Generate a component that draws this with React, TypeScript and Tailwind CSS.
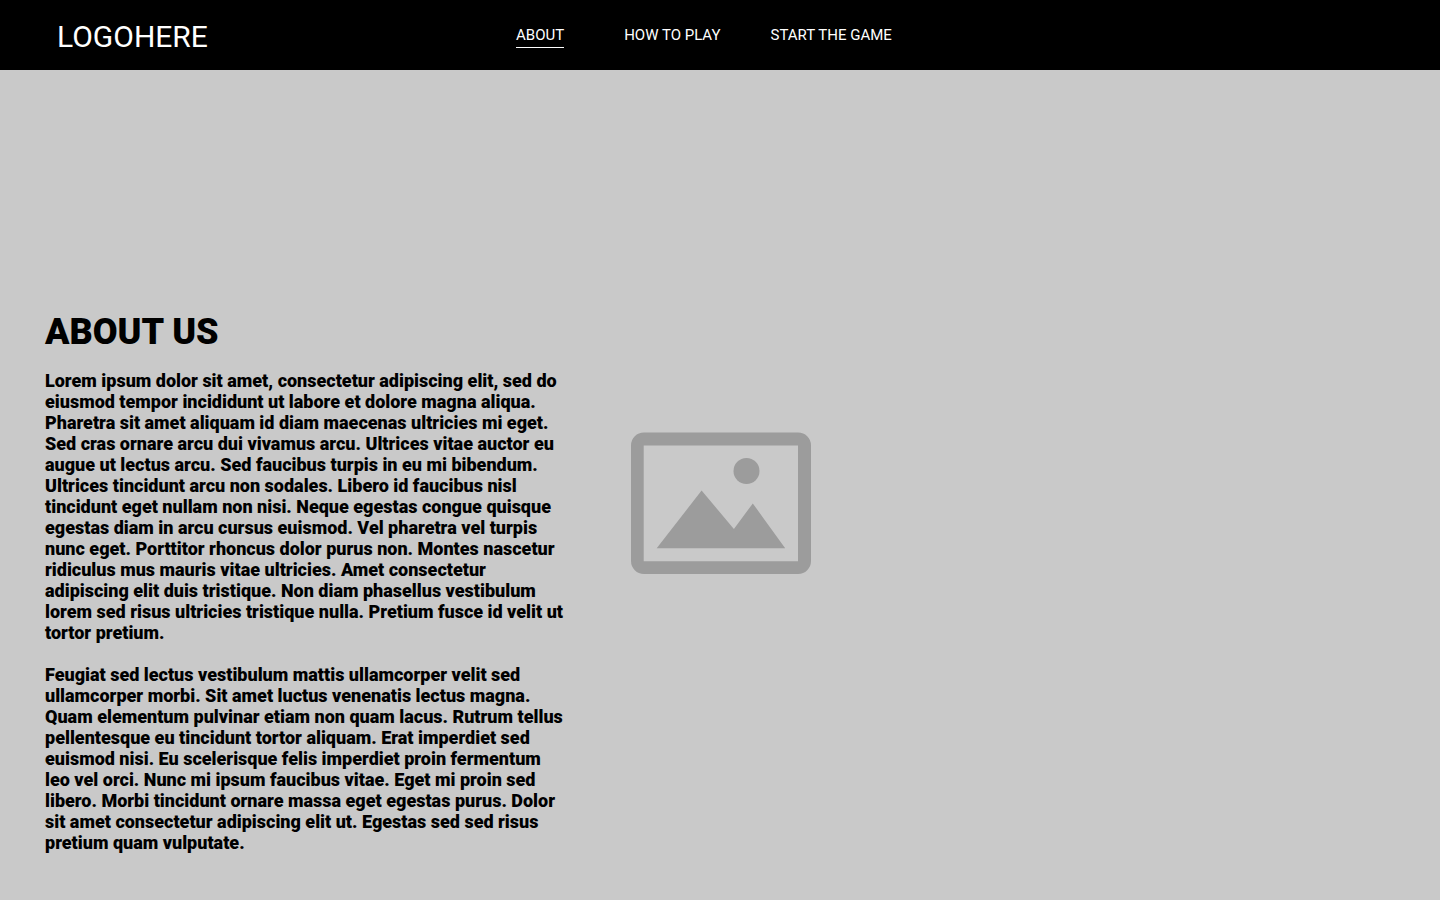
const NAV = [
  { label: "ABOUT", href: "#about", active: true, spacing: "mr-[60px]" },
  { label: "HOW TO PLAY", href: "#how-to-play", active: false, spacing: "mr-[50px]" },
  { label: "START THE GAME", href: "#start", active: false, spacing: "" },
];

const PARAGRAPHS = [
  "Lorem ipsum dolor sit amet, consectetur adipiscing elit, sed do eiusmod tempor incididunt ut labore et dolore magna aliqua. Pharetra sit amet aliquam id diam maecenas ultricies mi eget. Sed cras ornare arcu dui vivamus arcu. Ultrices vitae auctor eu augue ut lectus arcu. Sed faucibus turpis in eu mi bibendum. Ultrices tincidunt arcu non sodales. Libero id faucibus nisl tincidunt eget nullam non nisi. Neque egestas congue quisque egestas diam in arcu cursus euismod. Vel pharetra vel turpis nunc eget. Porttitor rhoncus dolor purus non. Montes nascetur ridiculus mus mauris vitae ultricies. Amet consectetur adipiscing elit duis tristique. Non diam phasellus vestibulum lorem sed risus ultricies tristique nulla. Pretium fusce id velit ut tortor pretium.",
  "Feugiat sed lectus vestibulum mattis ullamcorper velit sed ullamcorper morbi. Sit amet luctus venenatis lectus magna. Quam elementum pulvinar etiam non quam lacus. Rutrum tellus pellentesque eu tincidunt tortor aliquam. Erat imperdiet sed euismod nisi. Eu scelerisque felis imperdiet proin fermentum leo vel orci. Nunc mi ipsum faucibus vitae. Eget mi proin sed libero. Morbi tincidunt ornare massa eget egestas purus. Dolor sit amet consectetur adipiscing elit ut. Egestas sed sed risus pretium quam vulputate.",
];

function Header() {
  return (
    <header className="grid h-[70px] grid-cols-[516px_1fr] items-center bg-black text-white">
      <a href="#home" className="justify-self-start pl-[57px] pt-1 text-[30px] leading-9">
        LOGOHERE
      </a>
      <nav className="flex text-[15px] leading-[18px]">
        {NAV.map((item) => (
          <a
            key={item.label}
            href={item.href}
            aria-current={item.active ? "page" : undefined}
            className={`border-b pt-1 pb-[3px] whitespace-nowrap ${item.active ? "border-white" : "border-transparent"} ${item.spacing}`}
          >
            {item.label}
          </a>
        ))}
      </nav>
    </header>
  );
}

function PictureIcon() {
  return (
    <svg viewBox="0 0 180 142" className="h-[142px] w-[180px]" fill="#9c9c9c" role="img" aria-label="Picture">
      <path
        fillRule="evenodd"
        d="M12.900 .5H167.100A12.900 12.900 0 0 1 180 13.400V129.100A12.900 12.900 0 0 1 167.100 142H12.900A12.900 12.900 0 0 1 0 129.100V13.400A12.900 12.900 0 0 1 12.900 .5ZM12.700 13.400V129.200H167V13.400Z"
      />
      <circle cx="115.500" cy="39" r="13" />
      <path d="M25.700 116.300L70.600 58.500L102.900 97L121.800 71.400L154.200 116.300Z" />
    </svg>
  );
}

export default function App() {
  return (
    <div className="min-h-screen bg-[#c9c9c9] font-['Roboto',sans-serif] text-black">
      <Header />
      <main id="about" className="flex items-start gap-[66px] px-[45px] pt-[241px] pb-[46px]">
        <section className="w-[520px] shrink-0">
          <h1 className="text-[36px] leading-[42px] font-black">ABOUT US</h1>
          <div className="mt-[17px] flex flex-col gap-[21px] text-[18px] leading-[21px] font-black">
            {PARAGRAPHS.map((text) => (
              <p key={text}>{text}</p>
            ))}
          </div>
        </section>
        <div className="pt-[121px]">
          <PictureIcon />
        </div>
      </main>
    </div>
  );
}
